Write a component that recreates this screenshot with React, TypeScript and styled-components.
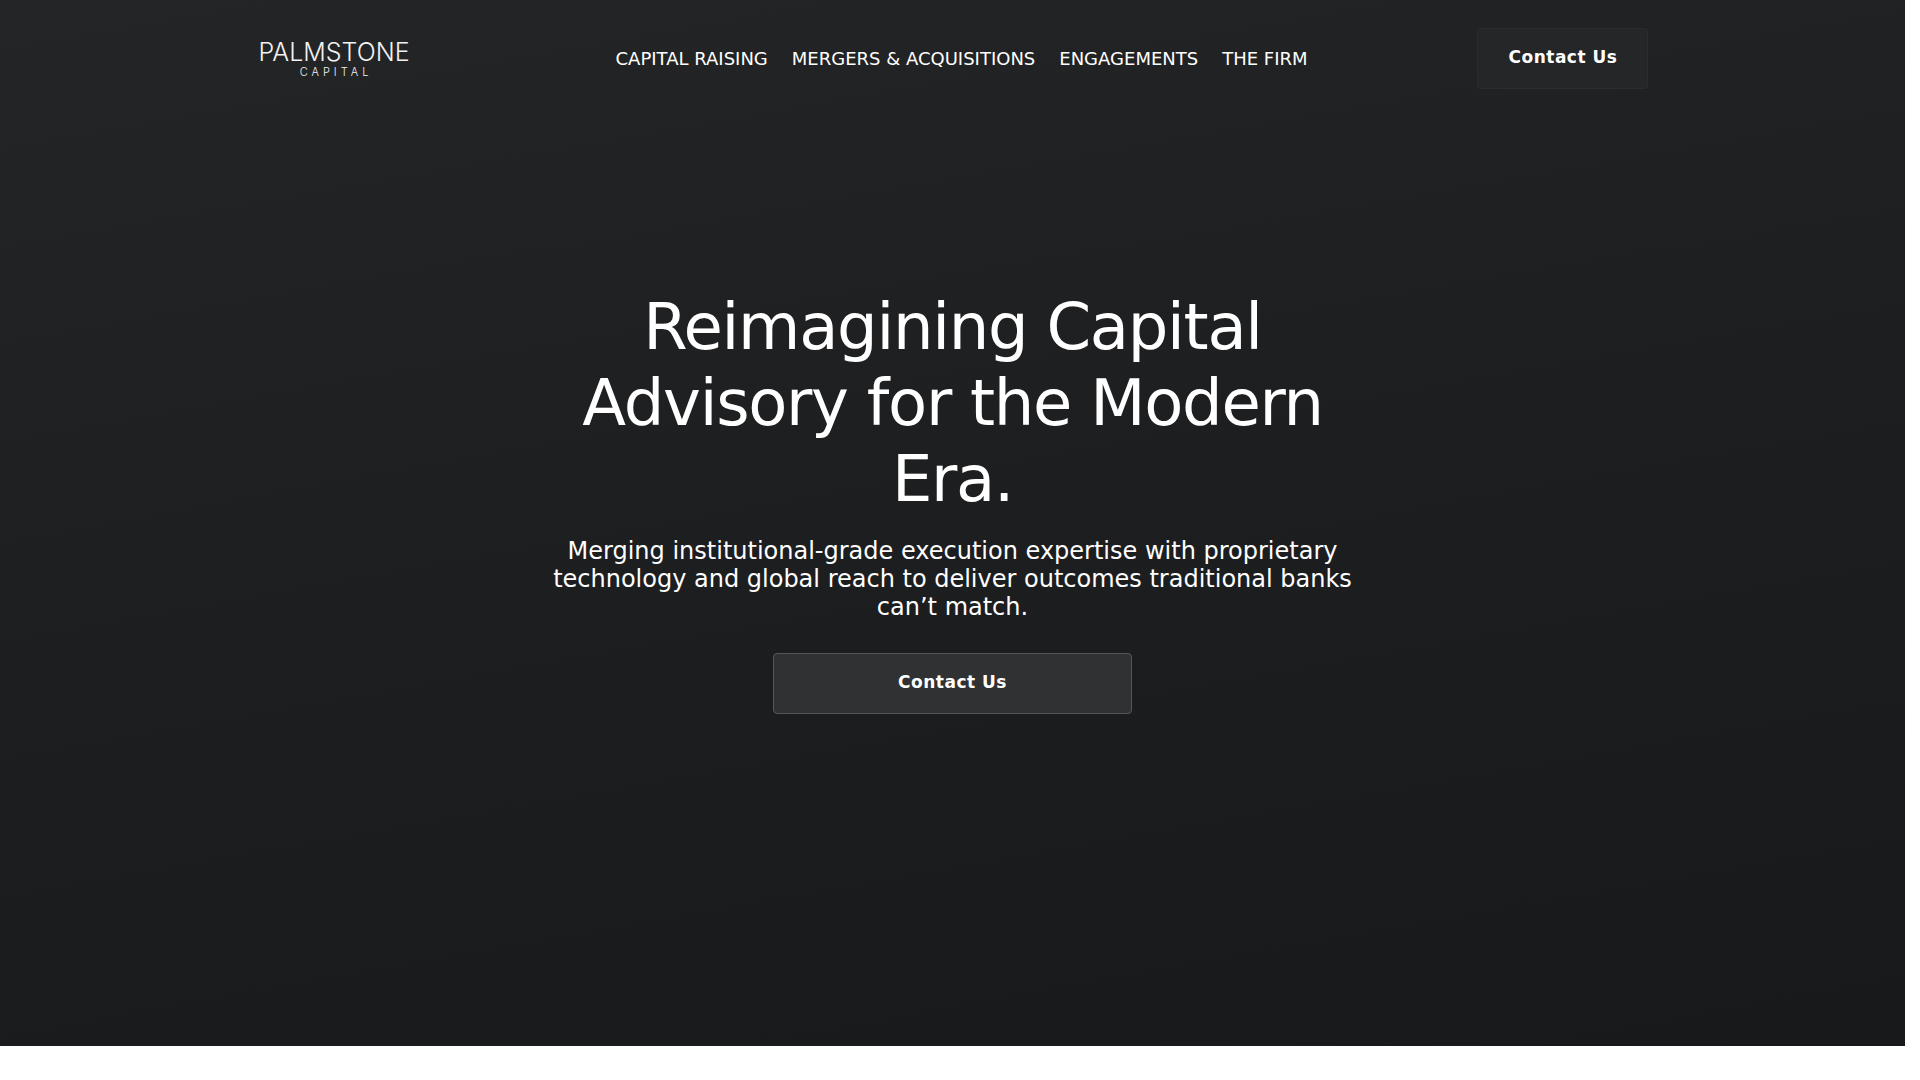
import React from "react";
import styled, { createGlobalStyle } from "styled-components";

const GlobalStyle = createGlobalStyle`
  *, *::before, *::after { box-sizing: border-box; }
  html { background: #fff; }
  body {
    margin: 0;
    padding-right: 15px;
    font-family: "DejaVu Sans", Verdana, sans-serif;
    color: #fff;
  }
`;

const Hero = styled.div`
  background: linear-gradient(170deg, #242526 0%, #1d1e20 50%, #18191a 100%);
`;

const Header = styled.header`
  display: flex;
  align-items: center;
  justify-content: space-between;
  max-width: 1392px;
  margin: 0 auto;
  padding: 28px 0;
`;

const Logo = styled.a`
  display: flex;
  flex-direction: column;
  align-items: center;
  padding: 2px 36px 0 2px;
  font-family: Inter, "Open Sans", sans-serif;
  font-weight: 300;
  color: #f2f2f2;
  text-decoration: none;
`;

const LogoName = styled.span`
  font-size: 25px;
  line-height: 24px;
`;

const LogoSub = styled.span`
  font-size: 11px;
  line-height: 16px;
  letter-spacing: 4px;
  padding-left: 4px;
`;

const Nav = styled.nav`
  display: flex;
  gap: 24px;
`;

const NavLink = styled.a`
  font-size: 18px;
  line-height: 24px;
  color: #fff;
  text-decoration: none;
  text-transform: uppercase;
`;

const Button = styled.button<{ $solid?: boolean }>`
  height: 61px;
  width: ${(p) => (p.$solid ? "359px" : "auto")};
  padding: 0 30px 3px;
  border: 1px solid ${(p) => (p.$solid ? "#555657" : "#2b2c2d")};
  border-radius: 4px;
  background: ${(p) => (p.$solid ? "#303132" : "#242627")};
  color: #fff;
  font: bold 17px "DejaVu Sans", Verdana, sans-serif;
  letter-spacing: 0.03em;
  cursor: pointer;
`;

const Content = styled.main`
  display: flex;
  flex-direction: column;
  align-items: center;
  max-width: 820px;
  margin: 0 auto;
  padding: 172px 0 332px;
  text-align: center;
`;

const Title = styled.h1`
  margin: 0 0 20px;
  font-size: 64px;
  font-weight: 400;
  line-height: 76px;
  letter-spacing: -0.02em;
`;

const Lead = styled.p`
  margin: 0 0 32px;
  font-size: 24px;
  line-height: 28px;
`;

const links = ["Capital Raising", "Mergers & Acquisitions", "Engagements", "The Firm"];

export default function App() {
  return (
    <>
      <GlobalStyle />
      <Hero>
        <Header>
          <Logo href="#">
            <LogoName>PALMSTONE</LogoName>
            <LogoSub>CAPITAL</LogoSub>
          </Logo>
          <Nav>
            {links.map((label) => (
              <NavLink key={label} href="#">{label}</NavLink>
            ))}
          </Nav>
          <Button type="button">Contact Us</Button>
        </Header>
        <Content>
          <Title>Reimagining Capital Advisory for the Modern Era.</Title>
          <Lead>
            Merging institutional-grade execution expertise with proprietary technology and
            global reach to deliver outcomes traditional banks can’t match.
          </Lead>
          <Button type="button" $solid>Contact Us</Button>
        </Content>
      </Hero>
    </>
  );
}
